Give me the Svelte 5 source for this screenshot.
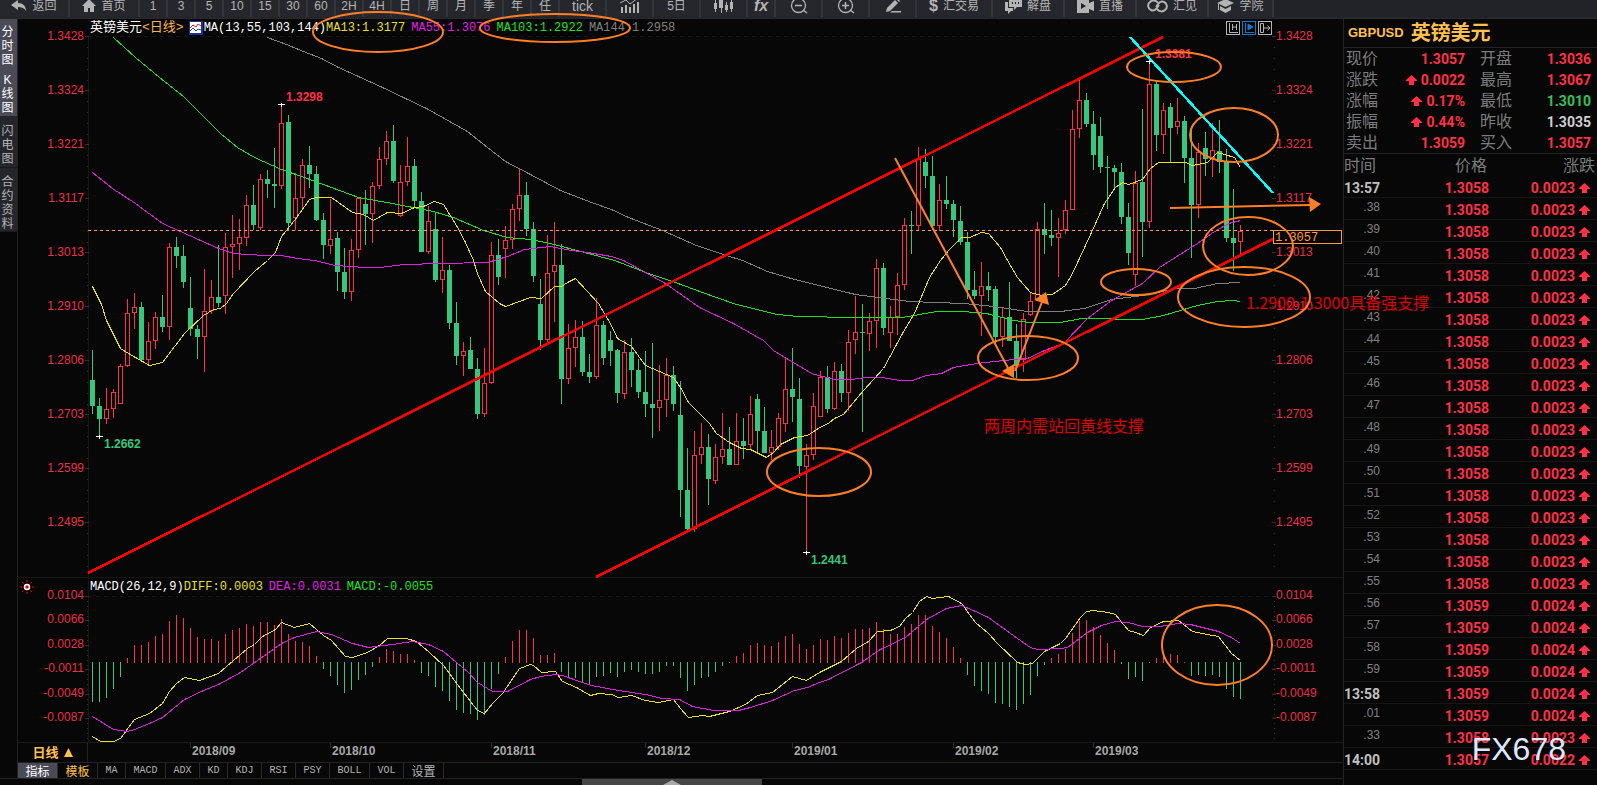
<script>
  const x0 = 92.5;
  const step = 7;
  const base = 662;

  // Each candle: direction (1 = up, 0 = down), high, body top, body bottom, low
  const candles = [
    [0,350,380,406,414],[0,398,406,419,436],[1,388,409,419,424],[1,389,392,409,418],[1,364,366,404,404],
    [1,299,313,366,367],[1,293,307,313,329],[0,302,307,360,361],[1,322,341,360,364],[1,312,317,341,349],
    [0,295,317,327,332],[1,243,247,327,340],[0,237,247,256,268],[0,245,256,282,288],[0,277,308,329,336],
    [0,325,329,337,359],[1,269,311,337,372],[1,280,297,311,314],[0,245,297,303,307],[1,233,247,296,314],
    [1,215,244,247,278],[1,219,237,244,270],[1,195,205,238,246],[0,185,205,225,230],[1,174,179,228,230],
    [0,170,179,184,198],[0,148,184,186,208],[1,105,123,186,189],[0,115,122,223,230],[1,173,198,218,230],
    [1,159,165,198,209],[0,146,165,174,188],[0,166,174,220,221],[0,213,220,245,259],[1,199,239,246,254],
    [0,232,238,272,291],[0,248,272,292,299],[1,239,250,292,301],[1,197,198,250,258],[0,190,204,214,245],
    [1,182,186,214,243],[1,147,159,186,189],[1,131,141,159,165],[0,125,141,181,183],[1,165,182,216,217],
    [1,137,166,182,186],[0,159,166,201,207],[0,192,201,252,252],[1,206,221,252,254],[0,213,229,280,282],
    [1,237,270,280,293],[0,265,270,323,329],[0,302,323,356,365],[1,342,351,356,376],[0,337,350,369,369],
    [0,358,369,414,419],[1,348,383,414,417],[1,242,255,383,384],[0,239,255,277,285],[1,226,240,249,278],
    [1,204,209,240,249],[1,169,195,209,221],[0,182,195,229,236],[0,222,229,276,282],[0,279,304,340,350],
    [1,235,273,340,342],[1,222,265,272,322],[0,244,265,379,404],[1,324,348,379,384],[1,320,337,348,367],
    [0,321,337,372,376],[0,354,372,377,383],[1,298,325,377,379],[0,321,325,358,365],[0,331,340,351,366],
    [0,349,350,393,403],[1,340,352,394,399],[0,338,352,370,387],[0,359,370,392,398],[0,351,392,404,417],
    [0,343,404,408,438],[1,365,400,408,431],[1,358,375,400,417],[0,366,375,404,411],[0,381,415,490,517],
    [0,448,490,529,531],[1,431,455,529,532],[1,423,447,455,464],[0,434,447,479,505],[1,444,457,481,484],
    [1,413,449,457,464],[0,427,449,465,465],[1,413,441,465,465],[0,418,441,446,459],[1,396,414,445,449],
    [0,394,399,431,452],[0,407,431,453,453],[1,430,447,453,460],[1,413,418,447,450],[1,357,389,424,432],
    [0,348,389,397,422],[0,378,399,466,478],[1,444,455,467,552],[1,393,406,455,460],[1,371,377,417,417],
    [0,366,377,409,413],[1,362,371,409,410],[0,364,371,393,402],[1,330,342,393,411],[1,296,332,340,354],
    [0,304,332,333,432],[1,313,321,334,351],[1,259,268,321,348],[0,263,268,328,335],[1,306,317,333,348],
    [1,273,285,317,335],[1,218,225,285,290],[0,211,225,226,254],[1,147,159,226,230],[0,149,162,176,188],
    [0,156,176,226,230],[1,184,200,226,231],[0,176,200,204,209],[0,200,204,220,237],[0,206,221,242,245],
    [0,232,242,290,299],[0,271,290,296,299],[1,262,286,296,336],[0,272,286,290,301],[0,286,289,337,345],
    [1,308,317,337,347],[0,282,317,341,341],[0,324,341,366,378],[1,313,319,360,372],[1,293,301,315,316],
    [1,222,229,300,301],[0,203,229,235,254],[0,210,235,238,246],[1,218,233,238,277],[1,200,210,230,234],
    [1,110,129,210,210],[1,79,100,129,138],[0,93,100,124,127],[0,111,124,155,170],[0,117,136,167,173],
    [0,156,167,168,209],[0,165,168,172,190],[0,163,172,217,224],[0,203,217,253,265],[1,171,183,275,286],
    [0,109,182,222,257],[1,61,84,222,228],[0,81,84,135,151],[1,103,110,135,154],[0,103,107,128,162],
    [1,98,121,127,134],[0,116,121,158,183],[0,126,158,205,258],[1,143,152,205,218],[0,132,148,159,176],
    [1,123,150,158,177],[0,120,151,162,173],[0,149,162,238,242],[0,189,238,243,271],[1,225,231,242,254]
  ];

  const bars = [
    702,702,698,689,677,658,645,645,642,636,634,621,615,618,628,637,639,639,641,634,630,628,624,626,622,622,625,
    619,634,641,642,646,656,669,676,685,693,690,680,675,667,657,649,651,654,654,660,673,676,687,691,701,710,713,
    714,720,715,689,674,657,641,630,630,638,655,655,653,672,677,678,683,685,677,676,673,677,672,670,672,674,674,
    672,666,666,678,691,685,678,677,672,666,662,656,653,645,643,645,646,642,636,634,644,649,645,639,640,636,638,
    633,629,629,628,622,629,634,634,627,624,615,615,626,632,638,647,658,675,686,691,694,703,704,707,710,704,695,
    676,665,658,654,649,633,621,620,627,635,643,650,664,679,677,681,662,658,654,654,655,662,676,675,676,675,677,
    689,697,699
  ];

  const averages = [
    { name: 'gray', points: '267,37 286,44 303,51 321,58 338,67 358,76 382,87 426,108 467,131 487,147 505,161 530,174 560,190 591,202 611,209 628,217 662,230 696,245 726,255 742,260 767,271 794,279 855,294 909,301 963,303 993,306 1027,311 1060,311 1084,308 1111,299 1142,295 1176,288 1194,288 1217,283 1240,282' },
    { name: 'green', points: '113,37 135,57 159,77 183,96 220,133 237,147 254,157 281,169 304,177 331,187 358,197 392,203 433,211 453,217 483,230 507,237 530,239 550,243 584,252 614,260 648,273 675,282 702,292 733,303 760,310 777,314 797,316 855,317 902,317 936,311 963,311 986,313 1013,320 1030,322 1060,322 1081,318 1142,319 1163,315 1197,305 1217,301 1233,300 1240,301' },
    { name: 'magenta', points: '92,172 112,188 135,203 162,223 189,235 218,248 233,253 264,255 281,255 297,258 314,260 335,265 365,267 380,267 404,264 440,263 487,262 497,259 507,256 524,249 550,246 571,250 587,252 611,256 623,260 645,272 665,283 699,307 733,323 763,340 773,350 811,373 834,379 851,379 865,377 882,377 899,380 912,380 926,375 941,373 953,367 976,363 1003,360 1027,358 1044,350 1060,344 1065,341 1087,318 1111,300 1142,283 1159,267 1170,260 1197,243 1211,233 1228,223 1240,220' },
    { name: 'yellow', points: '92,286 101,304 106,320 120,348 128,353 149,365 162,362 184,333 203,315 213,309 220,308 226,303 233,293 254,271 267,260 275,252 281,236 294,220 309,199 316,197 331,197 352,212 363,214 373,220 387,212 401,213 414,207 423,206 434,201 443,204 456,225 465,242 473,260 477,273 485,291 499,303 505,306 530,297 541,298 554,286 561,286 567,282 575,278 598,303 611,325 617,338 631,346 645,365 673,377 680,387 688,402 709,423 716,433 729,442 741,448 750,449 766,457 773,452 780,444 794,437 807,435 821,426 828,423 834,418 843,414 863,390 883,368 902,333 914,313 929,277 940,260 948,250 961,237 969,237 981,232 988,233 1000,247 1007,260 1017,277 1030,292 1041,295 1052,294 1065,285 1072,273 1078,260 1091,232 1104,203 1115,187 1122,182 1128,184 1142,179 1150,168 1158,162 1169,162 1185,162 1192,165 1207,162 1217,152 1234,157 1240,167' }
  ];

  const diff = '92,736 100,741 113,741 120,738 134,719 149,713 162,703 169,691 176,683 184,677 199,680 218,673 233,660 247,648 254,644 262,636 275,629 281,622 294,627 309,623 323,635 331,640 345,656 352,657 367,652 379,645 387,638 406,638 416,641 429,652 443,665 460,688 477,710 484,713 492,703 502,693 519,668 530,664 533,665 541,672 555,671 562,681 576,687 590,695 598,693 611,694 618,697 631,695 645,700 658,702 673,699 680,708 688,717 702,715 709,716 729,711 745,704 757,695 772,692 792,676 806,680 821,671 841,661 856,648 868,641 877,631 890,630 899,626 905,618 912,612 919,601 926,596 932,598 948,596 961,603 975,622 988,633 997,643 1017,662 1025,664 1032,663 1044,651 1060,643 1065,638 1080,617 1086,611 1093,610 1108,612 1115,614 1128,630 1135,632 1143,635 1150,627 1163,621 1178,620 1192,631 1207,634 1218,636 1231,653 1240,660';
  const dea = '92,716 113,729 127,731 134,729 149,723 162,717 184,699 203,690 218,684 240,672 267,653 281,643 294,637 316,631 331,634 352,643 368,647 392,644 412,641 428,644 443,651 456,662 468,672 477,682 492,691 507,691 530,679 540,676 555,674 562,675 579,681 591,685 618,690 645,694 662,698 679,699 692,706 713,710 738,710 750,707 772,700 794,690 807,687 819,682 828,679 861,662 878,650 905,637 926,619 946,608 961,605 973,610 988,617 1017,638 1030,647 1037,649 1060,648 1067,647 1087,632 1101,625 1115,621 1128,622 1142,626 1159,626 1178,623 1190,624 1218,631 1231,637 1240,643';

  const prices = ['1.3428','1.3324','1.3221','1.3117','1.3013','1.2910','1.2806','1.2703','1.2599','1.2495'];
  const macdScale = [['0.0104',596],['0.0066',620],['0.0028',645],['-0.0011',669],['-0.0049',694],['-0.0087',718]];
  const rings = [[378,32,65,20],[555,28,75,14],[1174,67,47,15],[1234,135,44,27],[1248,246,45,29],[1244,297,66,30],[1136,282,35,13],[1028,358,50,22],[819,472,52,24]];
  const crosses = [[281.5,104.5],[99.5,436.5],[806.5,552.5],[1149.5,61.5]];
  const months = [['2018/09',190],['2018/10',330],['2018/11',491],['2018/12',645],['2019/01',792],['2019/02',953],['2019/03',1093]];

  const periods = ['1','3','5','10','15','30','60','2H','4H','日','周','月','季','年','任'];
  const side = [['分时图',48,true],['K线图',49,true],['闪电图',52,false],['合约资料',64,false]];
  const tabs = [['MA',28],['MACD',40],['ADX',34],['KD',28],['KDJ',34],['RSI',34],['PSY',34],['BOLL',40],['VOL',34],['设置',40]];

  const quotes = [
    ['现价','1.3057',false,'开盘','1.3036','red'],
    ['涨跌','0.0022',true,'最高','1.3067','red'],
    ['涨幅','0.17%',true,'最低','1.3010','green'],
    ['振幅','0.44%',true,'昨收','1.3035','white'],
    ['卖出','1.3059',false,'买入','1.3057','red']
  ];
  const ticks = [
    ['13:57','1.3058','0.0023'],
    ...Array.from({ length: 18 }, (_, i) => ['.' + (38 + i), '1.3058', '0.0023']),
    ...Array.from({ length: 4 }, (_, i) => ['.' + (56 + i), '1.3059', '0.0024']),
    ['13:58','1.3059','0.0024'],['.01','1.3059','0.0024'],['.33','1.3058','0.0023'],['14:00','1.3057','0.0022']
  ];
</script>

{#snippet up()}
  <svg class="up" viewBox="0 0 11 10" width="11" height="10" aria-hidden="true"><path d="M5.500 0L11 5V6H8V10H3V6H0V5Z" /></svg>
{/snippet}

<div class="app">
  <nav class="toolbar">
    <button class="w70"><svg width="16" height="14" viewBox="0 0 16 14"><path d="M0 6L7 1V4C12 4 15 7 15 12C13 9 11 8 7 8V11Z" fill="currentColor" /></svg>返回</button>
    <button class="w70"><svg width="14" height="14" viewBox="0 0 14 14"><path d="M7 0L14 7H12V13H8V9H6V13H2V7H0Z" fill="currentColor" /></svg>首页</button>
    {#each periods as p}<button class="w28">{p}</button>{/each}
    <button class="w47 tick">tick</button>
    <button class="w47" aria-label="指标图"><svg width="19" height="16" viewBox="0 0 19 16"><path d="M1 9h2v6H1zM5 7h2v8H5zM9 9h2v6H9zM13 6h2v9h-2zM17 4h2v11h-2z" fill="currentColor" /><path d="M0 5L6 2L10 6L18 0" fill="none" stroke="currentColor" /></svg></button>
    <button class="w47">5日</button>
    <button class="w47" aria-label="K线"><svg width="19" height="16" viewBox="0 0 19 16"><path d="M0 5h3v6H0zM5 1h4v9H5zM11 7h3v5h-3zM16 4h3v7h-3zM1 2h1v12H1zM7 0h1v15H7zM12 4h1v10h-1zM17 2h1v12h-1z" fill="currentColor" /></svg></button>
    <button class="w28 fx">fx</button>
    <button class="w47" aria-label="缩小"><svg width="18" height="16" viewBox="0 0 18 16"><path d="M13 12L17 15M5 7.500h7" stroke="currentColor" stroke-width="1.500" /><circle cx="8.500" cy="7.500" r="7" fill="none" stroke="currentColor" stroke-width="1.300" /></svg></button>
    <button class="w47" aria-label="放大"><svg width="18" height="16" viewBox="0 0 18 16"><path d="M13 12L17 15M5 7.500h7M8.500 4v7" stroke="currentColor" stroke-width="1.500" /><circle cx="8.500" cy="7.500" r="7" fill="none" stroke="currentColor" stroke-width="1.300" /></svg></button>
    <button class="w47" aria-label="画线"><svg width="16" height="16" viewBox="0 0 16 16"><path d="M1 14L2 10L10 2L13 5L5 13ZM11 1L12 0L15 3L14 4ZM7 13H16V14.500H5Z" fill="currentColor" /></svg></button>
    <button class="w76"><b class="usd">$</b>汇交易</button>
    <button class="w72"><svg width="17" height="16" viewBox="0 0 17 16"><path d="M4 0H17V9H12L9 12V9H4Z" fill="currentColor" /><path d="M0 4H3V10H8V13H6L3 16V13H0Z" fill="currentColor" /><path d="M7 4h1v2H7zM10 4h1v2h-1zM13 4h1v2h-1z" fill="#222" /></svg>解盘</button>
    <button class="w72"><svg width="17" height="14" viewBox="0 0 17 14"><path d="M0 0H12V4L17 2V12L12 10V14H0Z" fill="currentColor" /><path d="M4 4L9 7L4 10Z" fill="#222" /></svg>直播</button>
    <button class="w72"><svg width="21" height="14" viewBox="0 0 21 14"><g fill="none" stroke="currentColor" stroke-width="2"><path d="M11 4C9 1 5 1 3 3C0 5 1 10 4 11C6 12 8 11 9 10L12 6" /><path d="M10 10C12 13 16 13 18 11C21 9 20 4 17 3C15 2 13 3 12 4L9 8" /></g></svg>汇见</button>
    <button class="w65"><svg width="17" height="14" viewBox="0 0 17 14"><path d="M8.500 0L17 4L8.500 8L0 4ZM3 7L8.500 10L14 7V11L8.500 14L3 11ZM1 5H2V11H1Z" fill="currentColor" /></svg>学院</button>
  </nav>

  <div class="body">
    <div class="left">
      <div class="work">
        <aside>
          {#each side as [name, h, on]}
            <button class:on style="height:{h}px">{#each [...name] as c}<span>{c}</span>{/each}</button>
          {/each}
        </aside>
        <main>
          <div class="legend">
            <span class="pair">英镑美元<i>&lt;日线&gt;</i></span>
            <svg class="maicon" width="14" height="14" viewBox="0 0 14 14"><path d="M0 0H14V14H0Z" fill="#1c2f9c" /><path d="M1 1H12V12H1Z" fill="#fff" /><path d="M1 7L4 4L7 6L9 3L12 5" fill="none" stroke="#e02020" /><path d="M1 10L4 7L7 10L9 8L12 9" fill="none" stroke="#2040c0" /></svg>
            <span class="white">MA(13,55,103,144)</span>
            <span class="yellow">MA13:1.3177</span>
            <span class="val magenta">MA55:1.3076</span>
            <span class="val lime">MA103:1.2922</span>
            <span class="val gray">MA144:1.2958</span>
            <div class="modes">
              <button aria-label="缩放"><svg width="12" height="12" viewBox="0 0 12 12"><path d="M2.500 1V10.500H11M5.500 2V8M9.500 2V8M9 5H6" /></svg></button>
              <button class="active" aria-label="播放"><svg width="12" height="12" viewBox="0 0 12 12"><path d="M2.500 1V10.500H11" /><path d="M5 2L10 5L5 8Z" class="solid" /></svg></button>
              <button aria-label="移动"><svg width="12" height="12" viewBox="0 0 12 12"><path d="M1.500 1.500H4.500V10.500H1.500ZM5 6H11M8.500 3.500L11 6L8.500 8.500" /></svg></button>
            </div>
          </div>

          <svg class="plot" viewBox="18 36 1325 542">
            <g class="crisp axis">
              <path d="M88.500 36V578M18 577.500H1343" />
              <path d="M88 36.500H1273" stroke-dasharray="4 4" />
              {#each prices as _, k}
                <path d="M85 {36.5 + k * 54}h4M1272 {36.5 + k * 54}h4" class="major" />
                {#each [11, 22, 33, 44] as m}<path d="M87 {36.5 + k * 54 + m}h1M1274 {36.5 + k * 54 + m}h1" class="major" />{/each}
              {/each}
            </g>
            <g class="scale">
              {#each prices as p, k}
                <text x="84" y={40 + k * 54} text-anchor="end">{p}</text>
                <text x="1276" y={40 + k * 54}>{p}</text>
              {/each}
            </g>
            <g class="crisp">
              {#each candles as [d, h, t, b, l], i}
                {@const x = x0 + i * step}
                {#if d}
                  <path class="rise" d="M{x} {h}V{t}M{x} {b}V{l}M{x - 2} {t + 0.5}H{x + 2}V{b - 0.5}H{x - 2}Z" />
                {:else}
                  <path class="fall" d="M{x} {h}V{l}" />
                  <rect x={x - 2.5} y={t} width="5" height={b - t} fill="#35c77d" />
                {/if}
              {/each}
              <g transform="translate(0.500 0.500)">
                {#each averages as a}<polyline class="line {a.name}" points={a.points} />{/each}
              </g>
              <path d="M88 230.500H1273" stroke="#ff9b3c" stroke-dasharray="3 3" />
              <path d="M88 573L1163 37M596 577L1273 239" stroke="#ff0000" stroke-width="2.500" fill="none" />
              <path d="M1130 37L1273 193" stroke="#00ffff" stroke-width="2.500" />
              {#each crosses as [x, y]}<path d="M{x - 3.5} {y}h7M{x} {y - 2}v4" stroke="#fff" />{/each}
              <rect x="1273.500" y="230.500" width="68" height="13" fill="#070707" stroke="#ff9b3c" />
            </g>
            <text x="1275" y="241" class="tag">1.3057</text>
            <g class="extreme">
              <text x="286" y="101" class="hi">1.3298</text>
              <text x="1155" y="58" class="hi">1.3381</text>
              <text x="104" y="448">1.2662</text>
              <text x="811" y="564">1.2441</text>
            </g>
            <g class="note">
              <text x="984" y="432">两周内需站回黄线支撑</text>
              <text x="1246" y="309">1.2900-1.3000具备强支撑</text>
            </g>
            <g class="mark">
              {#each rings as [x, y, a, b]}<ellipse cx={x} cy={y} rx={a} ry={b} />{/each}
              <path d="M895 158L1008 368M1015 371L1042 302M1170 208L1311 205" />
              <path class="head" d="M1002 371L1014 364V378ZM1034 300L1046 292L1049 305ZM1309 197L1321 204L1310 212Z" />
            </g>
          </svg>

          <div class="legend macd">
            <svg class="sun" width="16" height="16" viewBox="0 0 16 16"><path d="M8 1V3M8 13V15M1 8H3M13 8H15M3 3L4.500 4.500M11.500 11.500L13 13M3 13L4.500 11.500M11.500 4.500L13 3" stroke="#f00" /><circle cx="8" cy="8" r="2.500" fill="#f00" stroke="#fff" stroke-width="1.500" /></svg>
            <span class="white">MACD(26,12,9)</span>
            <span class="yellow">DIFF:0.0003</span>
            <span class="val magenta">DEA:0.0031</span>
            <span class="val lime">MACD:-0.0055</span>
          </div>

          <svg class="plot" viewBox="18 596 1325 146">
            <g class="crisp axis">
              <path d="M88.500 578V742" />
              <path d="M88 596.500H1273" stroke-dasharray="4 4" />
              {#each macdScale as [_, y]}
                <path d="M85 {y + 0.5}h4M1272 {y + 0.5}h4" class="major" />
                {#each [5, 10, 15, 20] as m}<path d="M87 {y + m + 0.5}h1M1274 {y + m + 0.5}h1" class="major" />{/each}
              {/each}
            </g>
            <g class="scale">
              {#each macdScale as [t, y]}
                <text x="84" y={y + 3} text-anchor="end">{t}</text>
                <text x="1276" y={y + 3}>{t}</text>
              {/each}
            </g>
            <g class="crisp">
              {#each bars as y, i}
                {@const x = x0 + i * step}
                {#if y > 663}<path class="fall" d="M{x} {base}V{y}" />{:else}<path class="rise" d="M{x} {y}V{base + 1}" />{/if}
              {/each}
              <g transform="translate(0.500 0.500)">
                <polyline class="line yellow" points={diff} />
                <polyline class="line magenta" points={dea} />
              </g>
            </g>
            <g class="mark"><ellipse cx="1217" cy="645" rx="55" ry="40" /></g>
          </svg>

          <div class="dates">
            <button class="daily">日线<svg width="9" height="9" viewBox="0 0 9 9"><path d="M4.500 0L9 9H0Z" fill="#ffc04d" /></svg></button>
            <svg viewBox="88 743 1255 19">
              {#each months as [m, x]}
                <path d="M{x + 0.5} 743v5" stroke="#2b2b2b" class="crisp" />
                <text x={x + 2} y="755">{m}</text>
              {/each}
            </svg>
          </div>

          <div class="tabs">
            <button class="on cn" style="width:40px">指标</button>
            <button class="gold cn" style="width:40px">模板</button>
            {#each tabs as [t, w]}<button class:cn={t === '设置'} style="width:{w}px">{t}</button>{/each}
          </div>
        </main>
      </div>
      <footer><button aria-label="展开"><svg width="18" height="5" viewBox="0 0 18 5"><path d="M0 5L9 0L18 5Z" fill="#a8a8a8" /></svg></button></footer>
    </div>

    <section class="panel">
      <h1><span>GBPUSD</span>英镑美元</h1>
      <div class="quotes">
        {#each quotes as [a, v, arrow, b, w, tone]}
          <span class="name">{a}</span>
          <span class="num first">{#if arrow}{@render up()}{/if}{v}</span>
          <span class="name">{b}</span>
          <span class="num {tone}">{w}</span>
        {/each}
      </div>
      <table>
        <thead><tr><th>时间</th><th>价格</th><th>涨跌</th></tr></thead>
        <tbody>
          {#each ticks as [t, p, c]}
            <tr><td class:minute={t.includes(':')}>{t}</td><td>{p}</td><td>{c}{@render up()}</td></tr>
          {/each}
        </tbody>
      </table>
      <div class="brand">FX678</div>
    </section>
  </div>
</div>

<style>
  :global(body) { background: #070707; margin: 0; }
  .app { font-family: "Liberation Sans", "Noto Sans CJK SC", sans-serif; background: #070707; color: #b4b4b4; min-height: 100vh; overflow: hidden; }
  button { background: none; border: 0; padding: 0; margin: 0; color: inherit; font: inherit; cursor: pointer; }
  .toolbar { display: flex; height: 18px; background: #222328; border-bottom: 1px solid #2c2c2e; overflow: hidden; font-size: 12px; line-height: 12px; }
  .toolbar button { display: flex; flex: none; align-items: center; justify-content: center; gap: 5px; height: 17px; padding-bottom: 5px; box-sizing: border-box; border-right: 2px solid #35363b; background: #26272c; white-space: nowrap; }
  .toolbar svg { flex: none; }
  .toolbar .w28 { width: 28px; }
  .toolbar .w47 { width: 47px; }
  .toolbar .w65 { width: 65px; }
  .toolbar .w70 { width: 70px; }
  .toolbar .w72 { width: 72px; }
  .toolbar .w76 { width: 76px; }
  .toolbar .tick { font-size: 14px; }
  .toolbar .fx { font: italic bold 16px/12px "Liberation Sans", sans-serif; }
  .usd { font-size: 16px; }
  .body { display: flex; }
  .left { flex: 1; min-width: 0; display: flex; flex-direction: column; }
  .work { display: flex; }
  aside { width: 17px; flex: none; border-right: 1px solid #222; }
  aside button { display: flex; flex-direction: column; align-items: center; justify-content: center; width: 17px; padding: 6px 2px 0 0; background: #25262b; font-size: 12px; line-height: 14px; box-sizing: border-box; border-bottom: 1px solid #1a1a1c; }
  aside button.on { background: #4a4b56; color: #fff; border-color: #4a4b56; }
  main { flex: 1; min-width: 0; }
  .legend { display: flex; align-items: center; height: 17px; padding-left: 72px; font: 12px/16px "Liberation Mono", "Noto Sans CJK SC", monospace; white-space: nowrap; }
  .pair { font-size: 13px; color: #fff; }
  .pair i { font-style: normal; color: #ffb54d; }
  .maicon { margin: 0 1px 0 5px; }
  .val { margin-left: 6px; }
  .white { color: #fff; }
  span.yellow { color: #e8e020; }
  span.magenta { color: #e020e0; }
  .lime { color: #20e020; }
  span.gray { color: #808080; }
  .modes { display: flex; gap: 2px; margin-left: auto; margin-right: 71px; }
  .modes button { display: flex; border: 1px solid #b4b4b4; }
  .modes path { fill: none; stroke: #b4b4b4; }
  .modes .active { border-color: #1878c8; }
  .modes .active path { stroke: #1878c8; }
  .modes .active .solid { fill: #1878c8; }
  .legend.macd { height: 18px; padding-left: 0; }
  .sun { margin: 0 55px 0 1px; }
  .plot { display: block; width: 100%; overflow: visible; position: relative; z-index: 2; pointer-events: none; }
  .crisp { shape-rendering: crispEdges; }
  .axis path { stroke: #161616; fill: none; }
  .axis .major { stroke: #303030; }
  .scale text { font-size: 12px; fill: #ea2f48; }
  .rise { stroke: #ff3048; fill: none; }
  .fall { stroke: #35c77d; }
  .line { fill: none; }
  .line.gray { stroke: #808080; }
  .line.green { stroke: #20e020; }
  .line.magenta { stroke: #e020e0; }
  .line.yellow { stroke: #e8e020; }
  .tag { font: 12px "Liberation Mono", monospace; fill: #ff9b3c; }
  .extreme text { font-size: 12px; font-weight: bold; fill: #35c77d; }
  .extreme .hi { fill: #ff3048; }
  .note text { font-family: "Noto Sans CJK SC", sans-serif; font-size: 16px; fill: #e00000; }
  .mark { fill: none; stroke: #ff7f27; stroke-width: 2; }
  .mark .head { fill: #ff7f27; stroke: none; }
  .dates { display: flex; height: 19px; border-top: 1px solid #1a1a1a; }
  .dates > svg { flex: 1; min-width: 0; overflow: visible; }
  .dates text { font-size: 12px; font-weight: bold; fill: #a8a8a8; }
  .daily { display: flex; align-items: center; justify-content: center; gap: 5px; width: 70px; flex: none; box-sizing: border-box; border-right: 1px solid #222; color: #ffc04d; font-size: 13px; font-weight: bold; line-height: 18px; }
  .tabs { display: flex; height: 15px; border-top: 1px solid #222; font: 10px/14px "Liberation Mono", monospace; }
  .tabs button { flex: none; border-right: 1px solid #2a2a2a; box-sizing: border-box; }
  .tabs .cn { font: 12px/14px "Noto Sans CJK SC", sans-serif; }
  .tabs .on { background: #4a4b56; color: #fff; }
  .tabs .gold { color: #ffc04d; }
  footer { display: flex; justify-content: center; height: 6px; border-top: 1px solid #222; }
  footer button { display: flex; justify-content: center; align-items: flex-end; width: 180px; height: 6px; background: #464646; }
  .panel { position: relative; width: 254px; flex: none; box-sizing: border-box; border-left: 1px solid #222; }
  h1 { display: flex; align-items: center; gap: 7px; height: 28px; margin: 0; padding-left: 4px; border-bottom: 1px solid #222; color: #ffc04d; font-size: 20px; font-weight: bold; line-height: 28px; }
  h1 span { font-size: 13px; }
  .quotes { display: grid; grid-template-columns: 32px 102px 32px 1fr; grid-auto-rows: 21px; align-items: center; padding: 0 6px 0 2px; border-bottom: 1px solid #222; }
  .name { font-size: 16px; line-height: 20px; color: #7c7c7c; }
  .num { font: bold 14px/20px Roboto, sans-serif; color: #ff3048; text-align: right; }
  .num.first { padding-right: 15px; }
  .num.green { color: #35c05a; }
  .num.white { color: #d0d0d0; }
  .num .up { margin-right: 4px; }
  .up { fill: #ff3048; }
  table { width: 100%; border-collapse: collapse; table-layout: fixed; }
  th { height: 20px; padding: 2px 2px 0 0; font-size: 16px; font-weight: normal; line-height: 20px; color: #7c7c7c; text-align: right; }
  th:first-child { width: 36px; text-align: left; padding: 2px 0 0; }
  th:nth-child(2) { width: 107px; }
  td { height: 18px; padding: 3px 0 0; border-bottom: 1px solid #161616; font: bold 14px/18px Roboto, sans-serif; color: #ff3048; text-align: right; }
  td:first-child { padding: 0 0 3px; font: 12px/18px "Liberation Sans", sans-serif; color: #808080; }
  td:first-child.minute { padding: 3px 0 0; font: bold 14px/18px Roboto, sans-serif; color: #c0c0c0; }
  td:last-child { padding-right: 7px; }
  td .up { margin-left: 4px; }
  .brand { position: absolute; top: 712px; right: 31px; font-size: 32px; line-height: 36px; color: #dce8ff; }
</style>
